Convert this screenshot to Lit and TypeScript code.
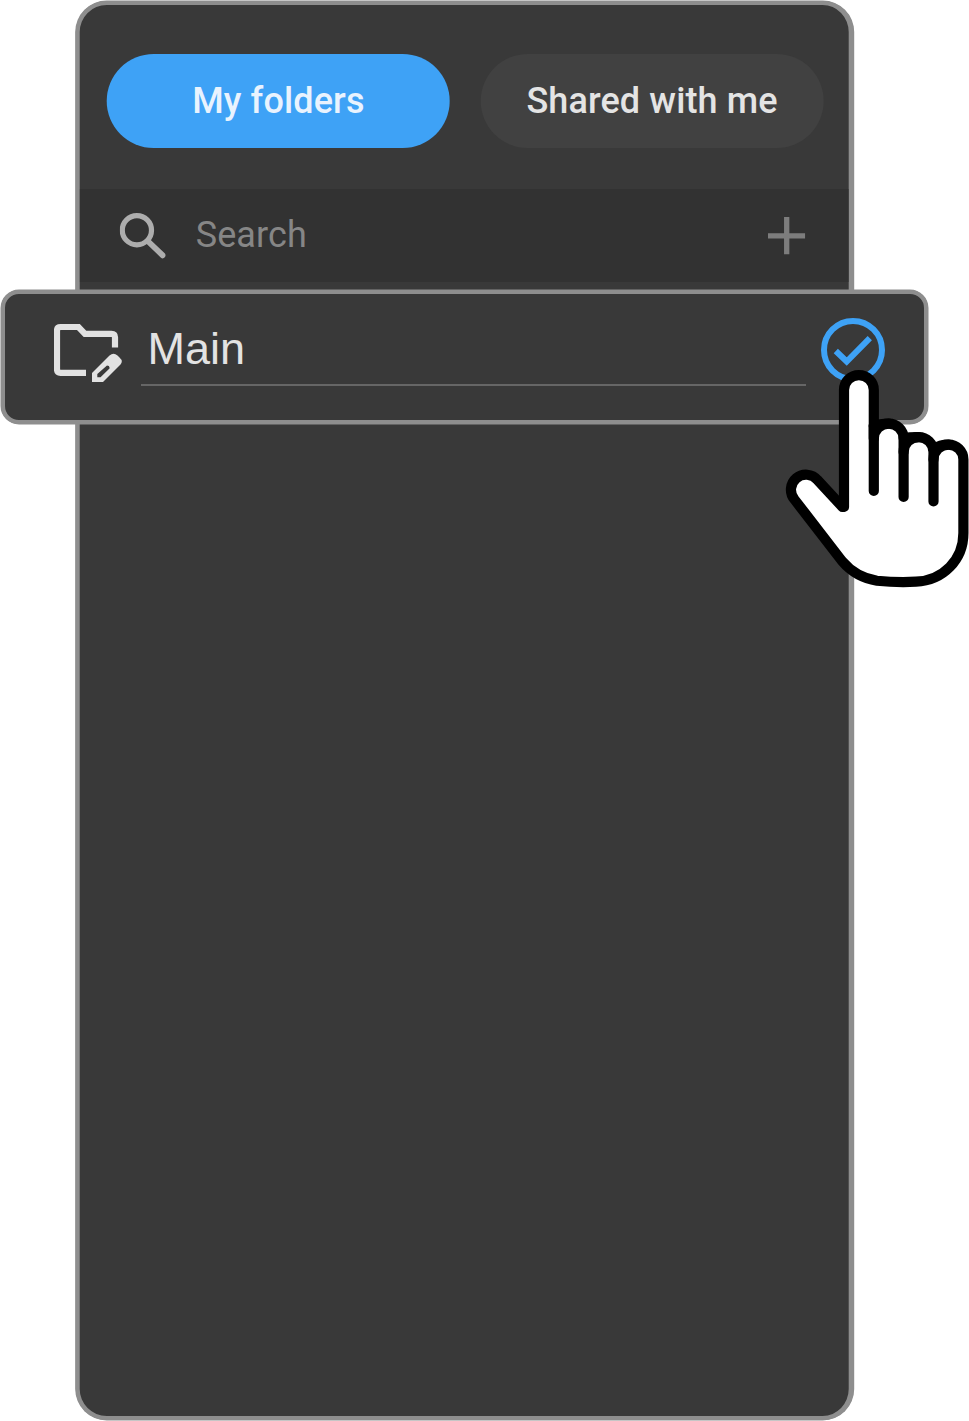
import { LitElement, html, css } from "lit";
import { customElement } from "lit/decorators.js";

@customElement("app-root")
export class AppRoot extends LitElement {
  static styles = css`
    :host { display: block; position: relative; width: 969px; height: 1421px; overflow: hidden; background: #fff; font-family: Roboto, sans-serif; }
    * { box-sizing: border-box; }
    svg { display: block; flex: none; }
    .panel { width: 778px; height: 1419px; margin: 1px 0 0 76px; border: 4px solid #8e8e8e; border-right-width: 5px; border-bottom-width: 4px; box-shadow: 0 0 0 0.5px #8e8e8e; border-radius: 31px; background: #393939; overflow: hidden; transform: translateX(-0.3px); }
    .tabs { display: flex; gap: 31px; height: 184px; padding: 48.5px 0 0 27.3px; }
    .tab { width: 342.7px; height: 94px; border: 0; border-radius: 47px; padding: 0; background: #414141; color: #e4e4e4; font: 500 36px/92px Roboto, sans-serif; letter-spacing: 0.12px; text-align: center; white-space: nowrap; }
    .active { background: #3ea2f6; color: #e9f3fe; }
    .search { display: flex; align-items: center; height: 93px; background: #323232; padding: 0 43px 0 40px; }
    .label { margin-left: 30px; flex: 1; font-size: 36px; line-height: 42px; color: #868686; letter-spacing: 0.1px; padding-bottom: 2px; }
    .row { position: absolute; left: 1px; top: 290px; width: 927px; height: 134px; border: 4px solid #8e8e8e; box-shadow: 0 0 0 0.5px #8e8e8e; border-radius: 18px; background: #393939; display: flex; padding: 24px 0 0 49px; }
    .folder { margin-top: 5px; }
    .name { width: 665px; height: 68px; margin: 0 15px 0 19px; padding-left: 6.5px; border-bottom: 2px solid #666; font: 45px/62px "Liberation Sans", Arial, sans-serif; color: #e3e3e3; }
    .hand { position: absolute; left: 780px; top: 365px; }
  `;

  render() {
    return html`
      <div class="panel">
        <div class="tabs">
          <button class="tab active">My folders</button>
          <button class="tab">Shared with me</button>
        </div>
        <div class="search">
          <svg width="46" height="46" viewBox="120 212 46 46" fill="none" stroke="#adadad">
            <circle cx="137.2" cy="229.2" r="14.6" stroke-width="5.2"/>
            <path d="M148.5 240.5L163 254.3" stroke-width="5.8" stroke-linecap="round"/>
          </svg>
          <span class="label">Search</span>
          <svg width="38" height="38" viewBox="768 217 38 38" fill="none" stroke="#7d7d7d" stroke-width="5.3">
            <path d="M786 217V254.3M767.300 235.800H804.400" transform="translate(1 0)"/>
          </svg>
        </div>
      </div>
      <div class="row">
        <svg class="folder" width="68" height="60" viewBox="54 323 68 60">
          <path d="M86 372.8H60.5Q57 372.8 57 369.3V330.5Q57 327 60.5 327H78.5L85 333.8H111.5Q115 333.8 115 337.3V347.5" fill="none" stroke="#e2e2e2" stroke-width="6.2"/>
          <path fill="#e2e2e2" fill-rule="evenodd" d="M92 373L109.500 355.500Q113.500 352 117.500 355.500L119.500 357.500Q123.500 361 120.500 364.500L103 382H92ZM97.300 377.300H100.500L109.500 368.500Q110 365.500 107 365.500L97.300 374Z"/>
        </svg>
        <div class="name">Main</div>
        <svg width="64" height="64" viewBox="821 318 64 64" fill="none" stroke="#3ea2f6" stroke-width="6">
          <circle cx="853" cy="350" r="29"/>
          <path d="M835.8 351L846.7 361.5L869.8 338.2"/>
        </svg>
      </div>
      <svg class="hand" width="189" height="226" viewBox="780 365 189 226">
        <path d="M844 507V390a14.900 14.900 0 0 1 29.800 0V438.500a14.900 14.900 0 0 1 29.800 0V452a14.950 14.950 0 0 1 29.900 0V459.500a14.950 14.950 0 0 1 29.900 0V533C963.400 560 943 580.500 916 581.700Q897 582.700 877 580.700Q856 577.500 842 561L794.500 499.500A14.800 14.800 0 0 1 817.500 480Z" fill="#fff"/>
        <g fill="none" stroke="#000" stroke-width="10.200" stroke-linecap="round" stroke-linejoin="round">
          <path d="M844 507V390a14.900 14.900 0 0 1 29.800 0V491"/>
          <path d="M873.800 425V438.500a14.900 14.900 0 0 1 29.800 0V497"/>
          <path d="M873.800 426Q880 423.600 888.700 423.600"/>
          <path d="M903.600 452a14.950 14.950 0 0 1 29.900 0V501.500"/>
          <path d="M903.600 438Q910 437 918.500 437.100"/>
          <path d="M933.500 459.500a14.950 14.950 0 0 1 29.900 0V533C963.400 560 943 580.500 916 581.700Q897 582.700 877 580.700Q856 577.500 842 561L794.500 499.500A14.800 14.800 0 0 1 817.500 480L842.500 507"/>
          <path d="M933.500 449Q940 444.700 948.500 444.600"/>
        </g>
      </svg>
    `;
  }
}
